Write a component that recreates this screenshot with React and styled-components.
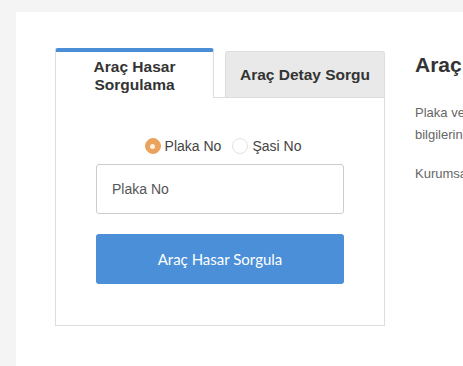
import React, { useState } from "react";
import styled, { createGlobalStyle } from "styled-components";

const GlobalStyle = createGlobalStyle`
  html, body {
    margin: 0;
    padding: 0;
    background: #f4f4f4;
    font-family: "Liberation Sans", Arial, sans-serif;
    overflow: hidden;
  }
`;

const App = () => {
  const [mode, setMode] = useState("plaka");

  return (
    <>
      <GlobalStyle />
      <Page>
        <Panel>
          <Card>
            <TabRow>
              <Tab active>
                Araç Hasar
                <br />
                Sorgulama
              </Tab>
              <Tab>Araç Detay Sorgu</Tab>
            </TabRow>
            <Body>
              <RadioRow>
                <RadioLabel onClick={() => setMode("plaka")}>
                  <Radio checked={mode === "plaka"} />
                  Plaka No
                </RadioLabel>
                <RadioLabel onClick={() => setMode("sasi")}>
                  <Radio checked={mode === "sasi"} />
                  Şasi No
                </RadioLabel>
              </RadioRow>
              <Input type="text" placeholder={mode === "plaka" ? "Plaka No" : "Şasi No"} />
              <Button>Araç Hasar Sorgula</Button>
            </Body>
          </Card>
          <Info>
            <Heading>Araç Hasar Sorgulama</Heading>
            <Text>
              Plaka veya şasi numarası ile aracınızın hasar bilgilerine kolayca ulaşabilirsiniz.
            </Text>
            <Text>Kurumsal müşterilerimiz için toplu sorgulama yapılabilir.</Text>
          </Info>
        </Panel>
      </Page>
    </>
  );
};

export default App;

const Page = styled.div`
  padding: 12px 0 0 16px;
  height: 366px;
  box-sizing: border-box;
`;

const Panel = styled.div`
  background: #fff;
  height: 100%;
  box-sizing: border-box;
  padding: 36px 0 0 39px;
  display: flex;
  gap: 30px;
  overflow: hidden;
`;

const Card = styled.div`
  width: 330px;
  flex-shrink: 0;
`;

const TabRow = styled.div`
  display: flex;
  align-items: flex-end;
  gap: 11px;
  border-bottom: 1px solid #ddd;
`;

const Tab = styled.div`
  box-sizing: border-box;
  height: ${(p) => (p.active ? "50px" : "46px")};
  width: ${(p) => (p.active ? "159px" : "160px")};
  margin-bottom: ${(p) => (p.active ? "-1px" : "0")};
  display: flex;
  align-items: center;
  justify-content: center;
  text-align: center;
  font-size: 15.5px;
  font-weight: bold;
  line-height: 18px;
  color: #333;
  background: ${(p) => (p.active ? "#fff" : "#e9e9e9")};
  border: 1px solid #ddd;
  border-top: ${(p) => (p.active ? "4px solid #4a8fd6" : "1px solid #ddd")};
  border-bottom: ${(p) => (p.active ? "none" : "0")};
  border-radius: 3px 3px 0 0;
  padding-top: ${(p) => (p.active ? "1px" : "0")};
`;

const Body = styled.div`
  border: 1px solid #ddd;
  border-top: none;
  height: 228px;
  box-sizing: border-box;
  padding: 38px 40px 0;
  display: flex;
  flex-direction: column;
  align-items: center;
`;

const RadioRow = styled.div`
  display: flex;
  align-items: center;
  justify-content: center;
  gap: 11px;
  height: 20px;
  padding-left: 6px;
`;

const RadioLabel = styled.label`
  display: flex;
  align-items: center;
  gap: 4px;
  font-size: 14px;
  color: #444;
  cursor: pointer;
`;

const Radio = styled.span`
  width: 16px;
  height: 16px;
  border-radius: 50%;
  box-sizing: border-box;
  background: ${(p) => (p.checked ? "#eba25c" : "#fff")};
  border: 1px solid ${(p) => (p.checked ? "#eba25c" : "#e2e2e2")};
  display: flex;
  align-items: center;
  justify-content: center;

  &::after {
    content: "";
    width: 5px;
    height: 5px;
    border-radius: 50%;
    background: #fff1e0;
    display: ${(p) => (p.checked ? "block" : "none")};
  }
`;

const Input = styled.input`
  margin-top: 8px;
  width: 248px;
  height: 50px;
  box-sizing: border-box;
  border: 1px solid #ccc;
  border-radius: 3px;
  padding: 0 15px;
  font-family: "Liberation Sans", Arial, sans-serif;
  font-size: 14px;
  color: #333;
  outline: none;

  &::placeholder {
    color: #555;
  }
`;

const Button = styled.button`
  margin-top: 20px;
  width: 248px;
  height: 50px;
  border: none;
  border-radius: 3px;
  background: #4a8fd8;
  color: #fff;
  font-family: Lato, "Open Sans", sans-serif;
  font-size: 15px;
  cursor: pointer;

  &:hover {
    background: #3d80c8;
  }
`;

const Info = styled.div`
  width: 320px;
  flex-shrink: 0;
  padding-top: 5px;
`;

const Heading = styled.h2`
  margin: 0;
  font-size: 21px;
  line-height: 24px;
  font-weight: bold;
  color: #333;
  white-space: nowrap;
`;

const Text = styled.p`
  margin: 25px 0 0;
  font-size: 13px;
  line-height: 22px;
  color: #666;

  & + & {
    margin-top: 17px;
  }
`;
